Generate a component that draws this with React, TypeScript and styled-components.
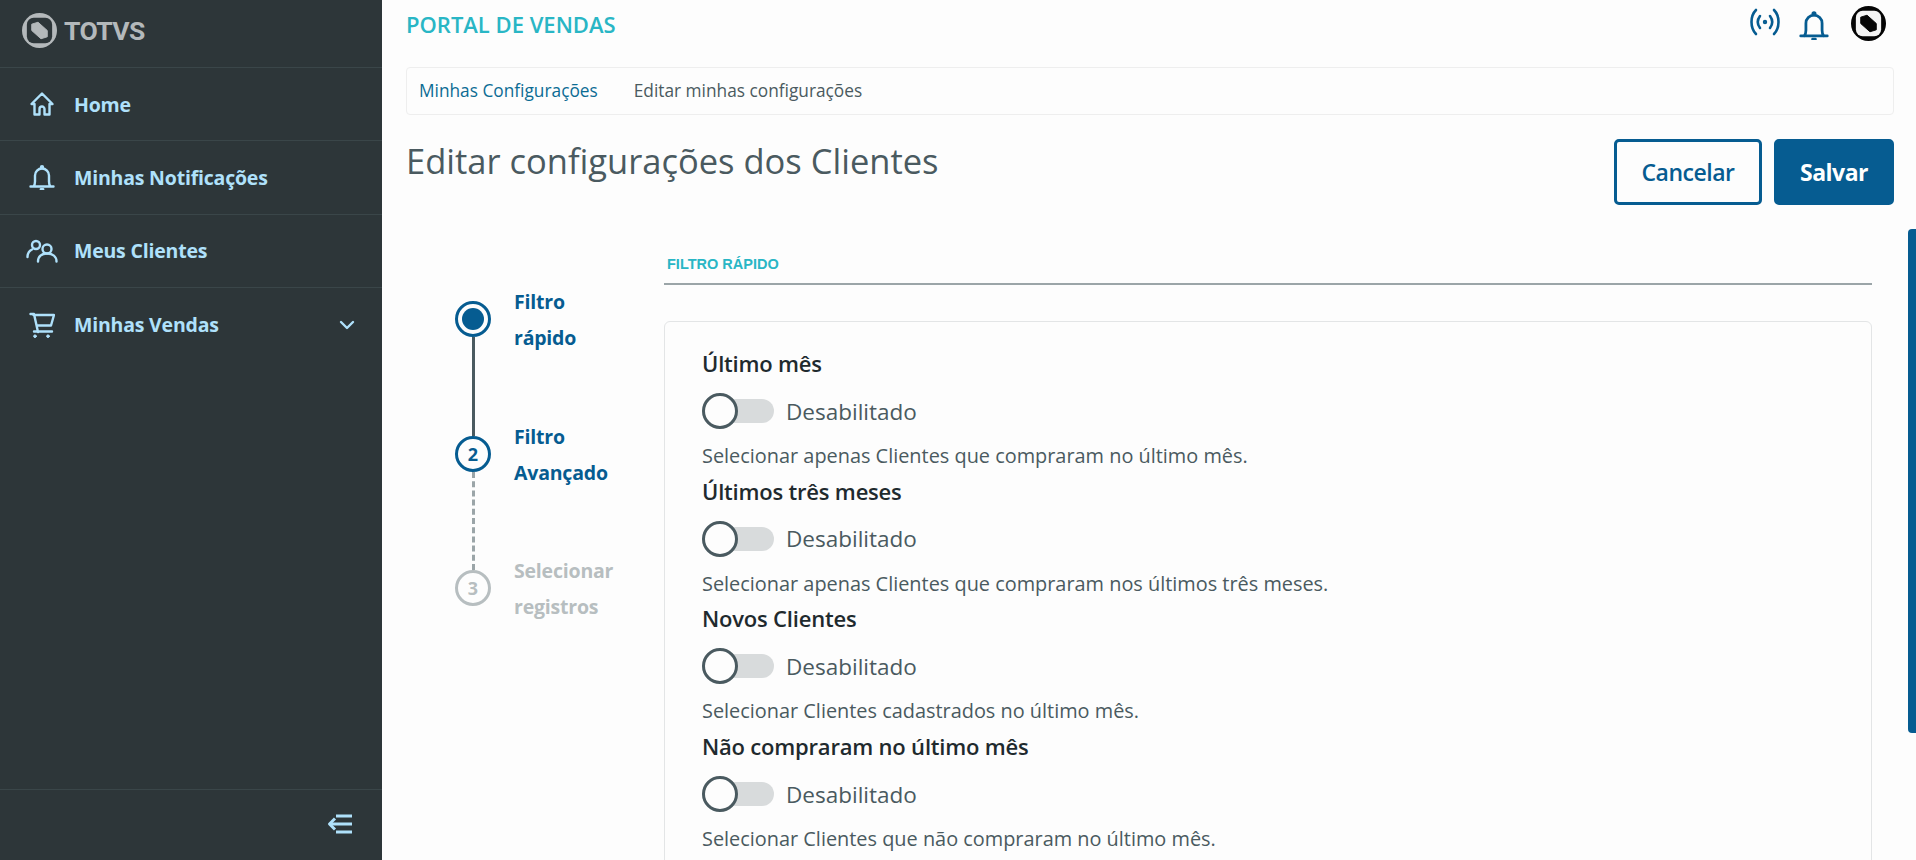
import React from "react";
import styled, { createGlobalStyle } from "styled-components";

const FONT = `"Open Sans", "Noto Sans", sans-serif`;

const Global = createGlobalStyle`
  html, body { margin: 0; padding: 0; height: 100%; overflow: hidden; background: #fdfdfd; }
  #root { height: 100%; }
  * { box-sizing: border-box; }
`;

const Shell = styled.div`
  display: flex;
  width: 1916px;
  height: 860px;
  overflow: hidden;
  font-family: ${FONT};
  position: relative;
`;

const Sidebar = styled.aside`
  width: 382px;
  flex: none;
  display: flex;
  flex-direction: column;
  background: #2d3639;
  color: #afe1fb;
`;

const Brand = styled.div`
  height: 68px;
  flex: none;
  display: flex;
  align-items: center;
  gap: 7px;
  padding: 0 0 6px 22px;
  border-bottom: 1px solid #3a4649;
`;

const BrandName = styled.span`
  font-family: Roboto, sans-serif;
  font-weight: 700;
  font-size: 26.5px;
  letter-spacing: -0.6px;
  color: #b4b9bb;
`;

const NavItem = styled.div`
  height: 73.3px;
  flex: none;
  display: flex;
  align-items: center;
  padding: 0 27px 0 26px;
  border-bottom: ${(p: { $last?: boolean }) => (p.$last ? "none" : "1px solid #3a4649")};
`;

const NavIcon = styled.span`
  width: 32px;
  height: 32px;
  display: flex;
  align-items: center;
  justify-content: center;
  margin-right: 16px;
`;

const NavLabel = styled.span`
  flex: 1;
  font-size: 19.5px;
  font-weight: 700;
  letter-spacing: -0.2px;
`;

const SidebarFoot = styled.div`
  margin-top: auto;
  height: 71px;
  display: flex;
  align-items: center;
  justify-content: flex-end;
  padding: 0 29px 2px 0;
  border-top: 1px solid #3a4649;
`;

const Main = styled.main`
  flex: 1;
  min-width: 0;
  display: flex;
  flex-direction: column;
  padding: 0 22px 0 24px;
  background: #fdfdfd;
`;

const TopBar = styled.header`
  height: 67px;
  flex: none;
  display: flex;
  justify-content: space-between;
  padding: 0 8px 0 0;
`;

const PortalName = styled.span`
  font-size: 22px;
  line-height: 49px;
  font-weight: 600;
  color: #29b6c5;
`;

const TopIcons = styled.div`
  display: flex;
  align-items: flex-start;
  padding-top: 6px;
  gap: 20px;
`;

const Breadcrumb = styled.nav`
  height: 48px;
  flex: none;
  display: flex;
  align-items: center;
  gap: 36px;
  padding: 0 12px 2px;
  border: 1px solid #eeeeee;
  border-radius: 4px;
  font-size: 17.3px;
`;

const Crumb = styled.span`
  color: ${(p: { $link?: boolean }) => (p.$link ? "#0c6c94" : "#4a5a60")};
`;

const TitleRow = styled.div`
  height: 106px;
  flex: none;
  display: flex;
  justify-content: space-between;
  padding-top: 24px;
`;

const Title = styled.h1`
  margin: 0;
  font-size: 34.5px;
  line-height: 44px;
  font-weight: 400;
  color: #4a5a60;
`;

const Actions = styled.div`
  display: flex;
  gap: 12px;
`;

const Button = styled.button<{ $primary?: boolean }>`
  height: 66px;
  width: ${(p) => (p.$primary ? "120px" : "148px")};
  border-radius: 5px;
  border: 3px solid #065c91;
  background: ${(p) => (p.$primary ? "#065c91" : "#fdfdfd")};
  color: ${(p) => (p.$primary ? "#ffffff" : "#065c91")};
  font-family: ${FONT};
  font-size: 23px;
  font-weight: ${(p) => (p.$primary ? 700 : 600)};
  letter-spacing: -0.5px;
  padding: 0;
`;

const Body = styled.div`
  flex: 1;
  min-height: 0;
  display: flex;
`;

const Stepper = styled.div`
  width: 258px;
  flex: none;
  padding: 63px 0 0 45px;
`;

const Step = styled.div`
  height: 134.5px;
  display: flex;
  gap: 19px;
`;

const Track = styled.div`
  width: 44px;
  display: flex;
  flex-direction: column;
  align-items: center;
  padding-top: 17px;
`;

const Bullet = styled.div<{ $tone: string }>`
  width: 36px;
  height: 36px;
  flex: none;
  border-radius: 50%;
  border: 3px solid ${(p) => p.$tone};
  color: ${(p) => p.$tone};
  display: flex;
  align-items: center;
  justify-content: center;
  font-size: 18px;
  font-weight: 700;
`;

const ActiveDot = styled.span`
  width: 22px;
  height: 22px;
  border-radius: 50%;
  background: #065c91;
`;

const Connector = styled.div<{ $dashed?: boolean }>`
  flex: 1;
  margin-bottom: -17px;
  border-left: 3px ${(p) => (p.$dashed ? "dashed #9ba5a8" : "solid #4a5a60")};
`;

const StepLabel = styled.div<{ $tone: string }>`
  font-size: 19.5px;
  line-height: 36px;
  font-weight: 700;
  letter-spacing: -0.2px;
  color: ${(p) => p.$tone};
`;

const Content = styled.section`
  flex: 1;
  min-width: 0;
  padding: 0 22px 0 0;
`;

const TabHeader = styled.div`
  height: 64px;
  padding: 33px 3px 0;
  border-bottom: 2px solid #9ba5a8;
  font-family: "Liberation Sans", sans-serif;
  font-size: 14.5px;
  line-height: 20px;
  font-weight: 700;
  color: #29b6c5;
`;

const Card = styled.div`
  margin-top: 36px;
  height: 600px;
  padding: 26px 37px;
  border: 1px solid #e3e5e6;
  border-radius: 6px;
`;

const Option = styled.div`
  height: 127.7px;
`;

const OptionTitle = styled.div`
  font-size: 22px;
  line-height: 30px;
  font-weight: 600;
  letter-spacing: -0.2px;
  color: #1f2a2e;
`;

const ToggleRow = styled.div`
  display: flex;
  align-items: center;
  height: 40px;
  margin-top: 13px;
  gap: 12px;
`;

const Switch = styled.div`
  position: relative;
  width: 72px;
  height: 24px;
  border-radius: 12px;
  background: #d8dbdc;
`;

const Knob = styled.span`
  position: absolute;
  left: 0;
  top: -6px;
  width: 36px;
  height: 36px;
  border-radius: 50%;
  border: 3px solid #4a5a60;
  background: #fdfdfd;
`;

const ToggleText = styled.span`
  font-size: 22.5px;
  color: #4a5a60;
`;

const OptionHint = styled.div`
  margin-top: 11px;
  font-size: 19.9px;
  line-height: 28px;
  color: #4a5a60;
`;

const ScrollThumb = styled.div`
  position: absolute;
  right: 0;
  top: 229px;
  width: 8px;
  height: 504px;
  border-radius: 4px 0 0 4px;
  background: #065c91;
`;

const LogoMark = ({ size, disc, inner }: { size: number; disc: string; inner: string }) => (
  <svg width={size} height={size} viewBox="0 0 36 36">
    <circle cx="18" cy="18" r="18" fill={disc} />
    <rect x="5" y="5" width="26" height="26" rx="7" fill={inner} />
    <path d="M10 11.500 16.500 9.500 26 18 26 24.500 19.500 26.500 10 18Z" fill={disc} stroke={disc} strokeWidth="1" strokeLinejoin="round" />
  </svg>
);

const stroke = { fill: "none", stroke: "#afe1fb", strokeWidth: 2.4, strokeLinecap: "round", strokeLinejoin: "round" } as const;

const HomeIcon = () => (
  <svg width="26" height="26" viewBox="0 0 26 26" {...stroke}>
    <path d="M13 2.500 2.500 13H5.500V23.500H10.500V18a2.500 2.500 0 0 1 5 0V23.500H20.500V13H23.500Z" />
  </svg>
);
const BellIcon = ({ color = "#afe1fb", size = 26 }: { color?: string; size?: number }) => (
  <svg width={size} height={size} viewBox="0 0 26 26" {...stroke} stroke={color}>
    <path d="M1.500 22.500h23M4.500 22.500c1-1 1.500-2.500 1.500-5v-6a7 7 0 0 1 14 0v6c0 2.500.5 4 1.500 5" />
    <circle cx="13" cy="3.200" r="1" fill={color} />
    <path d="M11.800 25.300h2.400" />
  </svg>
);
const UsersIcon = () => (
  <svg width="32" height="24" viewBox="0 0 32 24" {...stroke}>
    <circle cx="10" cy="6" r="4" />
    <circle cx="21" cy="10" r="4.500" />
    <path d="M1.500 18c0-4 1.500-6 4.500-7.500M12 22.500c0-5 3.500-8 9-8s9.500 3 9.500 8" />
  </svg>
);
const CartIcon = () => (
  <svg width="26" height="26" viewBox="0 0 26 26" {...stroke}>
    <path d="M1.500 2H5l4 18M4.500 3H25l-3 10.500H7.500M5 19.500H23" />
    <circle cx="6" cy="24.200" r="1.300" fill="#afe1fb" strokeWidth="1" />
    <circle cx="19" cy="24.200" r="1.300" fill="#afe1fb" strokeWidth="1" />
  </svg>
);
const Chevron = () => (
  <svg width="16" height="10" viewBox="0 0 16 10" {...stroke}>
    <path d="M2 2l6 6 6-6" />
  </svg>
);
const CollapseIcon = () => (
  <svg width="26" height="20" viewBox="0 0 26 20" fill="none" stroke="#afe1fb" strokeWidth="3" strokeLinejoin="round">
    <path d="M9 2h16M3 10h22M9 18h16" />
    <path d="M8 4.500 2.500 10 8 15.500" />
  </svg>
);
const SignalIcon = () => (
  <svg width="32" height="30" viewBox="0 0 32 30" fill="none" stroke="#065c91" strokeWidth="2.600" strokeLinecap="round">
    <path d="M7 4C1 10 1 22 7 28M25 4c6 6 6 18 0 24M11 10c-3 4-3 8 0 12M21 10c3 4 3 8 0 12" />
    <circle cx="16" cy="16" r="0.900" fill="#065c91" />
  </svg>
);
const BellSlot = styled.span`
  display: block;
  padding-top: 4px;
  margin: 0 2px 0 -2px;
`;

const steps = [
  { lines: ["Filtro", "rápido"], tone: "#065c91", active: true },
  { lines: ["Filtro", "Avançado"], tone: "#065c91", n: 2 },
  { lines: ["Selecionar", "registros"], tone: "#b7bec0", n: 3 },
];

const options = [
  ["Último mês", "Selecionar apenas Clientes que compraram no último mês."],
  ["Últimos três meses", "Selecionar apenas Clientes que compraram nos últimos três meses."],
  ["Novos Clientes", "Selecionar Clientes cadastrados no último mês."],
  ["Não compraram no último mês", "Selecionar Clientes que não compraram no último mês."],
];

export default function App() {
  return (
    <Shell>
      <Global />
      <Sidebar>
        <Brand>
          <LogoMark size={35} disc="#b4b9bb" inner="#2d3639" />
          <BrandName>TOTVS</BrandName>
        </Brand>
        <NavItem><NavIcon><HomeIcon /></NavIcon><NavLabel>Home</NavLabel></NavItem>
        <NavItem><NavIcon><BellIcon /></NavIcon><NavLabel>Minhas Notificações</NavLabel></NavItem>
        <NavItem><NavIcon><UsersIcon /></NavIcon><NavLabel>Meus Clientes</NavLabel></NavItem>
        <NavItem $last><NavIcon><CartIcon /></NavIcon><NavLabel>Minhas Vendas</NavLabel><Chevron /></NavItem>
        <SidebarFoot><CollapseIcon /></SidebarFoot>
      </Sidebar>
      <Main>
        <TopBar>
          <PortalName>PORTAL DE VENDAS</PortalName>
          <TopIcons>
            <SignalIcon />
            <BellSlot><BellIcon color="#065c91" size={30} /></BellSlot>
            <LogoMark size={35} disc="#050505" inner="#f4f4f4" />
          </TopIcons>
        </TopBar>
        <Breadcrumb>
          <Crumb $link>Minhas Configurações</Crumb>
          <Crumb>Editar minhas configurações</Crumb>
        </Breadcrumb>
        <TitleRow>
          <Title>Editar configurações dos Clientes</Title>
          <Actions>
            <Button>Cancelar</Button>
            <Button $primary>Salvar</Button>
          </Actions>
        </TitleRow>
        <Body>
          <Stepper>
            {steps.map((s, i) => (
              <Step key={i}>
                <Track>
                  <Bullet $tone={s.tone}>{s.active ? <ActiveDot /> : s.n}</Bullet>
                  {i < 2 && <Connector $dashed={i === 1} />}
                </Track>
                <StepLabel $tone={s.tone}>{s.lines[0]}<br />{s.lines[1]}</StepLabel>
              </Step>
            ))}
          </Stepper>
          <Content>
            <TabHeader>FILTRO RÁPIDO</TabHeader>
            <Card>
              {options.map(([t, d]) => (
                <Option key={t}>
                  <OptionTitle>{t}</OptionTitle>
                  <ToggleRow>
                    <Switch><Knob /></Switch>
                    <ToggleText>Desabilitado</ToggleText>
                  </ToggleRow>
                  <OptionHint>{d}</OptionHint>
                </Option>
              ))}
            </Card>
          </Content>
        </Body>
        <ScrollThumb />
      </Main>
    </Shell>
  );
}
